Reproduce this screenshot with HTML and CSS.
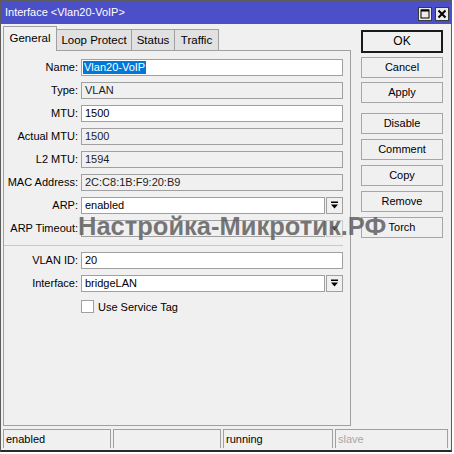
FILE: index.html
```html
<!DOCTYPE html>
<html>
<head>
<meta charset="utf-8">
<link rel="stylesheet" href="styles.css">
</head>
<body>
<div class="window">
  <div class="titlebar">
    <span class="title">Interface &lt;Vlan20-VoIP&gt;</span>
    <div class="tbtns">
      <span class="tbtn"><svg width="10" height="10" viewBox="0 0 10 10"><rect x="1" y="1" width="8" height="8" fill="none" stroke="#000" stroke-width="1"/><rect x="1" y="0.5" width="8" height="2" fill="#000"/></svg></span>
      <span class="tbtn"><svg width="10" height="10" viewBox="0 0 10 10"><path d="M1.5 1.5 L8.5 8.5 M8.5 1.5 L1.5 8.5" stroke="#000" stroke-width="2"/></svg></span>
    </div>
  </div>
  <div class="main">
    <div class="left">
      <div class="tabs">
        <div class="tab active">General</div>
        <div class="tab t2">Loop Protect</div>
        <div class="tab t3">Status</div>
        <div class="tab t4">Traffic</div>
      </div>
      <div class="panel">
        <div class="form">
          <label class="lbl">Name:</label>
          <div class="field edit"><span class="sel">Vlan20-VoIP</span></div>
          <label class="lbl">Type:</label>
          <div class="field ro">VLAN</div>
          <label class="lbl">MTU:</label>
          <div class="field edit">1500</div>
          <label class="lbl">Actual MTU:</label>
          <div class="field ro">1500</div>
          <label class="lbl">L2 MTU:</label>
          <div class="field ro">1594</div>
          <label class="lbl">MAC Address:</label>
          <div class="field ro">2C:C8:1B:F9:20:B9</div>
          <label class="lbl">ARP:</label>
          <div class="combo">
            <div class="field edit grow">enabled</div>
            <span class="dbtn"><svg width="9" height="9" viewBox="0 0 9 9"><rect x="1" y="0.5" width="7" height="1.5" fill="#000"/><path d="M1 3.5 H8 L4.5 7.5 Z" fill="#000"/></svg></span>
          </div>
          <label class="lbl">ARP Timeout:</label>
          <div class="combo">
            <div class="field ro grow"></div>
            <span class="dbtn plain"><svg width="9" height="9" viewBox="0 0 9 9"><path d="M1 2.5 H8 L4.5 6.5 Z" fill="#000"/></svg></span>
          </div>
          <div class="sep"></div>
          <label class="lbl">VLAN ID:</label>
          <div class="field edit">20</div>
          <label class="lbl">Interface:</label>
          <div class="combo">
            <div class="field edit grow">bridgeLAN</div>
            <span class="dbtn"><svg width="9" height="9" viewBox="0 0 9 9"><rect x="1" y="0.5" width="7" height="1.5" fill="#000"/><path d="M1 3.5 H8 L4.5 7.5 Z" fill="#000"/></svg></span>
          </div>
          <span></span>
          <div class="check"><span class="box"></span><span>Use Service Tag</span></div>
        </div>
      </div>
    </div>
    <div class="buttons">
      <div class="bgroup first">
        <div class="btn ok">OK</div>
        <div class="btn">Cancel</div>
        <div class="btn">Apply</div>
      </div>
      <div class="bgroup second">
        <div class="btn">Disable</div>
        <div class="btn">Comment</div>
        <div class="btn">Copy</div>
        <div class="btn">Remove</div>
        <div class="btn">Torch</div>
      </div>
    </div>
  </div>
  <div class="status">
    <div class="seg s1">enabled</div>
    <div class="seg s2"></div>
    <div class="seg s3">running</div>
    <div class="seg s4 dim">slave</div>
  </div>
  <div class="watermark">Настройка-Микротик.РФ</div>
</div>
</body>
</html>
```
FILE: styles.css
```css
* { box-sizing: border-box; }
html, body { margin: 0; padding: 0; background: #ffffff; }
body {
  font-family: "Liberation Sans", Arial, sans-serif;
  font-size: 11px;
  color: #000;
}
.window {
  position: relative;
  width: 452px;
  height: 452px;
  background: #f0f0f0;
  border: 1px solid #5c5c5c;
  border-bottom: 2px solid #2a2a2a;
  display: flex;
  flex-direction: column;
}
.titlebar {
  height: 23px;
  background: #4b50c8;
  color: #fff;
  display: flex;
  justify-content: space-between;
  padding: 0 2px 0 4px;
  flex: none;
}
.title { line-height: 23px; font-size: 11px; }
.tbtns {
  display: flex;
  gap: 3px;
  align-self: flex-end;
  margin-bottom: 3px;
}
.tbtn {
  width: 14px;
  height: 14px;
  background: #ececec;
  border: 1px solid #3a3a3a;
  display: flex;
  align-items: center;
  justify-content: center;
}
.main { display: flex; flex: none; }
.left { width: 348px; margin-left: 2px; margin-top: 2px; }
.tabs { display: flex; align-items: flex-end; height: 24px; }
.tab {
  height: 21px;
  border: 1px solid #a0a0a0;
  border-bottom: none;
  border-left: none;
  background: #e1e1e1;
  padding: 0;
  text-align: center;
  white-space: nowrap;
  line-height: 21px;
  font-size: 11.5px;
}
.tab.active {
  height: 25px;
  margin-bottom: -1px;
  background: #f0f0f0;
  border-left: 1px solid #a0a0a0;
  position: relative;
  z-index: 1;
  line-height: 22px;
  width: 54px;
}
.t2 { width: 75px; }
.t3 { width: 43px; }
.t4 { width: 44px; }
.panel {
  height: 376px;
  border: 1px solid #a0a0a0;
  padding-top: 8px;
}
.form {
  display: grid;
  grid-template-columns: 74px 262px;
  column-gap: 3px;
  row-gap: 6px;
}
.lbl {
  text-align: right;
  height: 17px;
  line-height: 17px;
  white-space: nowrap;
}
.field {
  height: 17px;
  border: 1px solid #a0a0a0;
  line-height: 15px;
  padding-left: 3px;
  white-space: nowrap;
}
.field.edit { background: #fff; }
.field.ro { background: #f0f0f0; color: #1e1e1e; }
.sel {
  background: #0078d7;
  color: #fff;
  margin-left: -2px;
  padding: 0 1px;
  display: inline-block;
  line-height: 13px;
}
.combo { display: flex; gap: 1px; }
.grow { flex: 1; }
.dbtn {
  width: 17px;
  height: 17px;
  border: 1px solid #a0a0a0;
  background: #f0f0f0;
  display: flex;
  align-items: center;
  justify-content: center;
  flex: none;
}
.dbtn.plain { border-color: #c8c8c8; }
.sep {
  grid-column: 1 / -1;
  height: 1px;
  margin-top: 2px;
  background: #c8c8c8;
}
.check {
  display: flex;
  align-items: center;
  gap: 4px;
  height: 17px;
}
.box {
  width: 13px;
  height: 13px;
  background: #fff;
  border: 1px solid #a0a0a0;
}
.buttons { margin-left: 10px; margin-top: 6px; width: 82px; }
.bgroup { display: flex; flex-direction: column; }
.bgroup.first { gap: 4px; }
.bgroup.second { gap: 5px; margin-top: 10px; }
.btn {
  height: 21px;
  border: 1px solid #a6a6a6;
  background: #f0f0f0;
  text-align: center;
  line-height: 19px;
}
.btn.ok {
  height: 23px;
  border: 2px solid #1a1a1a;
  line-height: 19px;
  font-size: 12px;
}
.status {
  display: flex;
  gap: 2px;
  margin: 3px 0 0 2px;
  height: 19px;
}
.seg {
  height: 19px;
  border: 1px solid #a0a0a0;
  border-bottom: none;
  padding-left: 2px;
  line-height: 18px;
}
.s1 { width: 108px; }
.s2 { width: 108px; }
.s3 { width: 110px; }
.s4 { width: 113px; }
.dim { color: #a8a8a8; }
.watermark {
  position: absolute;
  left: 77px;
  top: 213px;
  font-size: 25.5px;
  line-height: 25px;
  font-weight: bold;
  color: rgba(95, 95, 95, 0.85);
  white-space: nowrap;
  pointer-events: none;
  z-index: 5;
}
```
